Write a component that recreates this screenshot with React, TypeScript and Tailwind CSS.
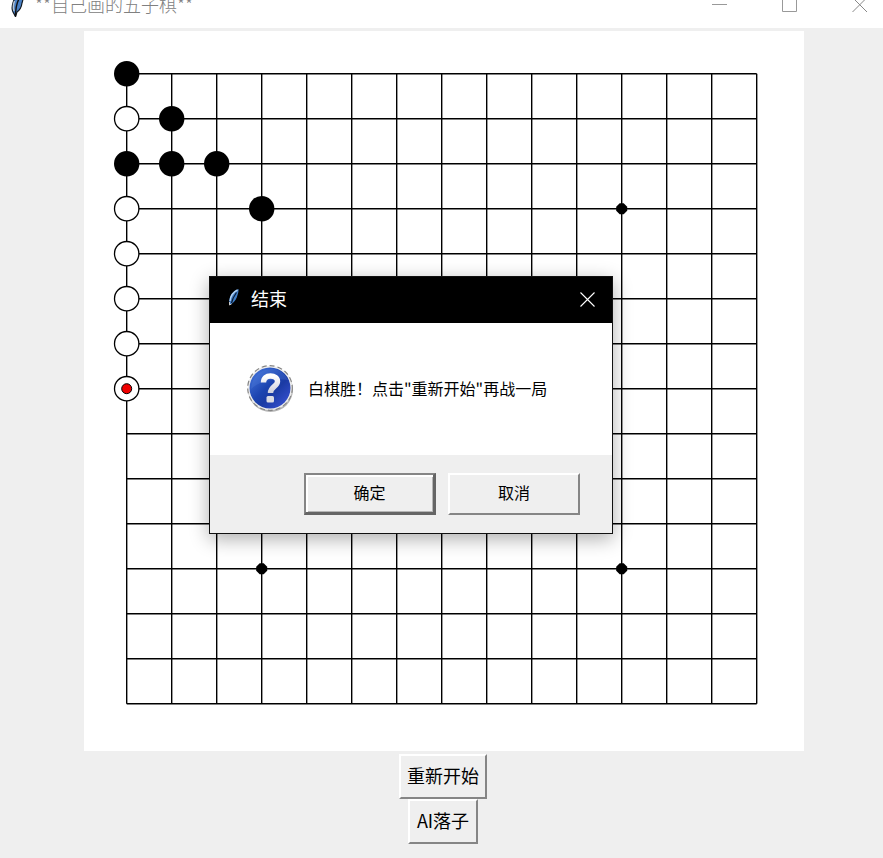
import React from "react";

const SIZE = 15;
const CELL = 45;
const ORIGIN = 42.7;
const at = (n: number) => ORIGIN + n * CELL;

const blackStones = [[0, 0], [1, 1], [0, 2], [1, 2], [2, 2], [3, 3]];
const whiteStones = [[0, 1], [0, 3], [0, 4], [0, 5], [0, 6], [0, 7]];
const starPoints = [[3, 3], [11, 3], [7, 7], [3, 11], [11, 11]];
const lastMove = [0, 7];

function TitleFeather() {
  return (
    <svg viewBox="0 0 14 24" className="mr-[11px] h-6 w-3.5" aria-hidden="true">
      <path
        d="M13 1C8 2 4 5 3 10c-1 3-1.500 6 0 9l2.500 4.500L7 19c3-2 4.500-5 5-9 1-3 1.500-6 1-9Z"
        fill="#4a80c4"
        stroke="#101820"
        strokeWidth="1.2"
      />
      <path d="M4.500 8C3 12 3 15 4 18" fill="none" stroke="#b9c4d0" strokeWidth="1.4" />
      <path d="M9.500 5C7 9 5.500 14 5.500 23.500" fill="none" stroke="#111" strokeWidth="1.4" />
    </svg>
  );
}

function DialogFeather() {
  return (
    <svg viewBox="0 0 12 20" className="mr-[11px] mb-1 h-5 w-3" aria-hidden="true">
      <path d="M10.500 2C6 3.500 2.500 7 1.500 12l-.5 6 2.500-1C7 14.500 9 11 9.500 8c.8-2 1.200-4 1-6Z" fill="#3f7cc4" />
      <path d="M9.500 3C5.500 5 2.500 9 2 14" fill="none" stroke="#b5d3f2" strokeWidth="1.4" />
      <path d="M8.500 5.500C6 9 4.500 12 3.500 16" fill="none" stroke="#0b1a30" strokeWidth="1.2" />
      <path d="M1.500 15v3l2-1" fill="none" stroke="#c9c9c9" strokeWidth="1" />
    </svg>
  );
}

function Board() {
  const lines = Array.from({ length: SIZE }, (_, i) => i);
  const end = at(SIZE - 1);
  return (
    <svg viewBox="0 0 720 720" className="block h-full w-full" role="img" aria-label="五子棋">
      <g stroke="#000" strokeWidth="1.4">
        {lines.map((i) => (
          <g key={i}>
            <line x1={ORIGIN} y1={at(i)} x2={end} y2={at(i)} />
            <line x1={at(i)} y1={ORIGIN} x2={at(i)} y2={end} />
          </g>
        ))}
      </g>
      {starPoints.map(([x, y]) => (
        <path
          key={`${x}-${y}`}
          transform={`translate(${at(x)} ${at(y)})`}
          d="M-2-5.500h4L5.500-2v4L2 5.500h-4L-5.500 2v-4Z"
        />
      ))}
      {blackStones.map(([x, y]) => (
        <circle key={`${x}-${y}`} cx={at(x)} cy={at(y)} r="12.700" />
      ))}
      {whiteStones.map(([x, y]) => (
        <circle key={`${x}-${y}`} cx={at(x)} cy={at(y)} r="12.200" fill="#fff" stroke="#000" strokeWidth="1.3" />
      ))}
      <circle cx={at(lastMove[0])} cy={at(lastMove[1])} r="5" fill="#f00000" stroke="#000" strokeWidth="1" />
    </svg>
  );
}

function QuestionIcon() {
  return (
    <svg viewBox="0 0 48 48" className="size-12 shrink-0" aria-hidden="true">
      <defs>
        <linearGradient id="ball" x1="0" y1="0" x2="1" y2="1">
          <stop offset="0" stopColor="#4a7be0" />
          <stop offset="0.45" stopColor="#1c44b0" />
          <stop offset="0.6" stopColor="#1b3ba4" />
          <stop offset="1" stopColor="#3f56dc" />
        </linearGradient>
        <linearGradient id="mark" x1="0" y1="0" x2="0" y2="1">
          <stop offset="0" stopColor="#fff" />
          <stop offset="1" stopColor="#cfcfdc" />
        </linearGradient>
      </defs>
      <circle cx="24.500" cy="25.500" r="22.500" fill="#b5b5b5" />
      <circle cx="24" cy="24" r="22.300" fill="#ededed" stroke="#858585" strokeWidth="1.2" strokeDasharray="5 3" />
      <circle cx="24" cy="24" r="20.500" fill="url(#ball)" />
      <path d="M5 25C6 10 18 4 27 5c7 0 12 5 15 11-12-2-27 0-37 9Z" fill="#6a94ec" opacity="0.2" />
      <path
        d="M17.500 18.500c0-4.500 3-6.500 7-6.500s7 2 7 5.500c0 5-7 5-7 11.500"
        fill="none"
        stroke="url(#mark)"
        strokeWidth="5.400"
      />
      <rect x="20.500" y="32" width="7.500" height="6.500" rx="1.500" fill="#dcdce4" />
    </svg>
  );
}

const raised =
  "border-2 border-t-white border-l-white border-r-[#858585] border-b-[#858585] bg-[#efefef] text-black pb-1";

function ResultDialog() {
  return (
    <div
      role="dialog"
      aria-labelledby="result-title"
      className="absolute top-[245px] left-[125px] w-[404px] border border-[#111] bg-white shadow-[0_5px_18px_rgba(0,0,0,0.32)]"
    >
      <header className="flex h-[46px] items-center bg-black pr-4 pb-0.5 pl-[18px] text-white">
        <DialogFeather />
        <h2 id="result-title" className="flex-1 pb-0.5 text-[18px] leading-6 font-normal">结束</h2>
        <button type="button" aria-label="关闭" className="flex size-4 items-center justify-center">
          <svg viewBox="0 0 16 16" className="size-4" fill="none" stroke="#fff" strokeWidth="1.1">
            <path d="M.5 1.500l14 14M14.500 1.500l-14 14" />
          </svg>
        </button>
      </header>
      <div className="flex h-[132px] items-center gap-3.5 pb-0.5 pl-9">
        <QuestionIcon />
        <p className="text-[16px] leading-6 whitespace-nowrap text-black">白棋胜！点击"重新开始"再战一局</p>
      </div>
      <footer className="flex h-[78px] items-center justify-end gap-3 bg-[#efefef] pr-8">
        <button type="button" className="h-[42px] w-[132px] border-2 border-r-[3px] border-b-[3px] border-[#858585] border-r-[#656565] border-b-[#656565] bg-[#efefef] pb-1 text-[16px] leading-6 text-black shadow-[inset_2px_2px_0_#fff,inset_-1px_-1px_0_#b5b5b5]">
          确定
        </button>
        <button type="button" className={`${raised} h-[42px] w-[132px] text-[16px] leading-6`}>
          取消
        </button>
      </footer>
    </div>
  );
}

export default function App() {
  return (
    <div className="min-h-screen overflow-hidden bg-[#efefef] font-['Noto_Sans_CJK_SC',sans-serif]">
      <header className="flex h-7 items-end overflow-hidden bg-white">
        <div className="flex h-[46px] w-full shrink-0 items-center pr-[15px] pl-2.5 text-[#808080]">
          <TitleFeather />
          <h1 className="flex-1 pb-0.5 text-[18px] leading-6 font-light">**自己画的五子棋**</h1>
          <div className="flex gap-[54px]">
            <button type="button" aria-label="最小化" className="size-4">
              <svg viewBox="0 0 16 16" className="size-4" fill="none" stroke="#999">
                <path d="M0 7.500h15" />
              </svg>
            </button>
            <button type="button" aria-label="最大化" className="size-4">
              <svg viewBox="0 0 16 16" className="size-4" fill="none" stroke="#999">
                <path d="M.5.5h14v14H.5Z" />
              </svg>
            </button>
            <button type="button" aria-label="关闭" className="size-4">
              <svg viewBox="0 0 16 16" className="size-4" fill="none" stroke="#888">
                <path d="M.5.5l14.500 14.500M15 .5L.5 15" />
              </svg>
            </button>
          </div>
        </div>
      </header>
      <main className="flex flex-col items-center pt-[3px] pl-[5px]">
        <div className="relative size-[720px] bg-white">
          <Board />
          <ResultDialog />
        </div>
        <div className="flex flex-col items-center pt-[3px] pr-0.5">
          <button type="button" className={`${raised} h-[45px] px-1.5 text-[18px] leading-6`}>
            重新开始
          </button>
          <button type="button" className={`${raised} h-[45px] px-[7px] text-[18px] leading-6`}>
            AI落子
          </button>
        </div>
      </main>
    </div>
  );
}
